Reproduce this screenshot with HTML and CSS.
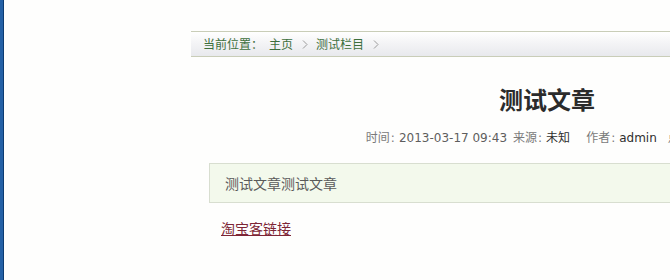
FILE: index.html
```html
<!DOCTYPE html>
<html lang="zh-CN">
<head>
<meta charset="utf-8">
<title>测试文章</title>
<link rel="stylesheet" href="styles.css">
</head>
<body>
<div class="page">
  <div class="edge"></div>
  <div class="main">
    <div class="content">
      <div class="crumb">
        <span>当前位置：</span><a class="home" href="#">主页</a><svg class="sep" width="6" height="9" viewBox="0 0 6 9"><path d="M1 0.5 L5 4.5 L1 8.5" fill="none" stroke="#9a9a9a" stroke-width="1"/></svg><a href="#">测试栏目</a><svg class="sep" width="6" height="9" viewBox="0 0 6 9"><path d="M1 0.5 L5 4.5 L1 8.5" fill="none" stroke="#9a9a9a" stroke-width="1"/></svg>
      </div>
      <h1 class="title">测试文章</h1>
      <div class="meta">
        <span class="cj lbl">时间</span><span class="lbl colon">:</span><span class="date g1">2013-03-17 09:43</span><span class="cj lbl">来源</span><span class="lbl colon">:</span><span class="cj val g2">未知</span><span class="cj lbl">作者</span><span class="lbl colon">:</span><span class="val g3">admin</span><span class="cj lbl">点击</span><span class="lbl colon">:</span><span class="val">56</span><span class="cj lbl">次</span>
      </div>
      <div class="intro">测试文章测试文章</div>
      <div class="body-text"><a class="tbk" href="#">淘宝客链接</a></div>
    </div>
  </div>
</div>
</body>
</html>
```

FILE: styles.css
```css
html, body {
  margin: 0;
  padding: 0;
  background: #fefefd;
  overflow: hidden;
}
body {
  width: 670px;
  height: 280px;
  font-family: "Liberation Sans", "Noto Sans CJK SC", sans-serif;
}
.page {
  display: flex;
  height: 280px;
}
.edge {
  width: 3px;
  flex-shrink: 0;
  background: #2461a6;
  border-right: 1px solid #0b3b72;
}
.main {
  flex: 1;
  padding-top: 31px;
  padding-left: 187px;
  overflow: hidden;
}
.content {
  width: 712px;
  flex-shrink: 0;
}
.crumb {
  height: 24px;
  line-height: 24px;
  border-top: 1px solid #c9cdb8;
  border-bottom: 1px solid #c9cdb8;
  background: linear-gradient(to bottom, #ffffff 0%, #f4f4f6 45%, #e8e9ed 100%);
  padding-left: 12px;
  font-size: 12px;
  color: #3d6f3d;
  display: flex;
  align-items: center;
  font-family: "Noto Sans CJK SC", sans-serif;
}
.crumb a {
  color: #3d6f3d;
  text-decoration: none;
}
.crumb .home {
  margin-left: 6px;
}
.crumb .sep {
  margin: 0 8px 0 9px;
}
.title {
  margin: 27px 0 0;
  text-align: center;
  font-size: 24px;
  line-height: 30px;
  font-weight: bold;
  color: #2b2b2b;
  font-family: "Noto Sans CJK SC", serif;
}
.meta {
  margin-top: 13px;
  display: flex;
  justify-content: center;
  align-items: baseline;
  font-family: "DejaVu Sans", "Noto Sans CJK SC", sans-serif;
  font-size: 12px;
  line-height: 20px;
  color: #6e6e6e;
  white-space: nowrap;
}
.meta .cj {
  font-family: "Noto Sans CJK SC", sans-serif;
  font-size: 12px;
}
.meta .lbl { color: #7a7a7a; }
.meta .colon { margin: 0 4px 0 1px; }
.meta .date { color: #5e5e5e; }
.meta .val { color: #2e2e2e; }
.meta .g1 { margin-right: 6px; }
.meta .g2 { margin-right: 16px; }
.meta .g3 { margin-right: 11px; }
.intro {
  margin: 15px 0 0 18px;
  height: 38px;
  line-height: 38px;
  border: 1px solid #d8ded0;
  background: #f3f9ec;
  padding-left: 15px;
  font-size: 14px;
  color: #5a5a5a;
  font-family: "Noto Sans CJK SC", sans-serif;
}
.body-text {
  margin: 15px 0 0 30px;
  font-size: 14px;
  line-height: 20px;
  font-family: "Noto Sans CJK SC", sans-serif;
}
.tbk {
  color: #7d2535;
  text-decoration: underline;
}
```
